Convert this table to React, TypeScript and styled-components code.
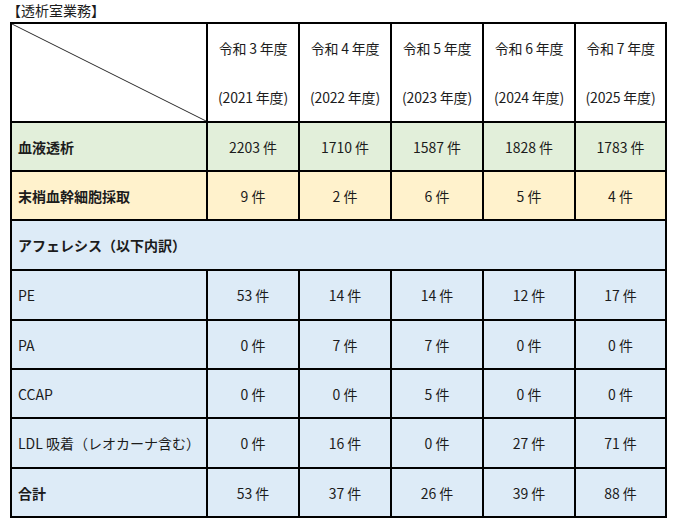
import React from "react";
import styled, { createGlobalStyle } from "styled-components";

const Global = createGlobalStyle`
  html, body { margin: 0; padding: 0; background: #ffffff; }
  body {
    font-family: "Noto Sans CJK JP", "Noto Sans", sans-serif;
    color: #1c1c1c;
  }
`;

const Page = styled.div`
  padding: 0 0 0 10px;
  width: 679px;
  box-sizing: border-box;
`;

const Title = styled.div`
  height: 22px;
  line-height: 20px;
  font-size: 14px;
  margin-left: -3px;
`;

const Grid = styled.div`
  display: grid;
  width: 657px;
  box-sizing: border-box;
  grid-template-columns: 194px 90px 90px 90px 90px 89px;
  grid-template-rows: 97px 47px 47px 48px 48px 47px 47px 48px 47px;
  gap: 2px;
  padding: 2px;
  background: #000;
`;

type Tone = "white" | "green" | "yellow" | "blue";
const toneColor: Record<Tone, string> = {
  white: "#ffffff",
  green: "#e2efda",
  yellow: "#fff2cc",
  blue: "#ddebf7",
};

const Cell = styled.div<{ $tone: Tone; $bold?: boolean; $label?: boolean; $span?: boolean }>`
  background: ${(p) => toneColor[p.$tone]};
  display: flex;
  align-items: center;
  justify-content: ${(p) => (p.$label ? "flex-start" : "center")};
  padding-left: ${(p) => (p.$label ? "6px" : "0")};
  font-size: 14px;
  font-weight: ${(p) => (p.$bold ? 700 : 400)};
  white-space: nowrap;
  grid-column: ${(p) => (p.$span ? "1 / -1" : "auto")};
`;

const DiagCell = styled.div`
  background: #ffffff;
`;

const Diag = styled.svg`
  display: block;
  width: 100%;
  height: 100%;
`;

const HeadCell = styled.div`
  background: #ffffff;
  display: flex;
  flex-direction: column;
  justify-content: space-around;
  align-items: center;
  font-size: 14px;
  white-space: nowrap;
  letter-spacing: -0.2px;
`;

const years = [
  ["令和 3 年度", "(2021 年度)"],
  ["令和 4 年度", "(2022 年度)"],
  ["令和 5 年度", "(2023 年度)"],
  ["令和 6 年度", "(2024 年度)"],
  ["令和 7 年度", "(2025 年度)"],
];

type Row = { label: string; tone: Tone; bold?: boolean; values?: number[] };

const rows: Row[] = [
  { label: "血液透析", tone: "green", bold: true, values: [2203, 1710, 1587, 1828, 1783] },
  { label: "末梢血幹細胞採取", tone: "yellow", bold: true, values: [9, 2, 6, 5, 4] },
  { label: "アフェレシス（以下内訳）", tone: "blue", bold: true },
  { label: "PE", tone: "blue", values: [53, 14, 14, 12, 17] },
  { label: "PA", tone: "blue", values: [0, 7, 7, 0, 0] },
  { label: "CCAP", tone: "blue", values: [0, 0, 5, 0, 0] },
  { label: "LDL 吸着（レオカーナ含む）", tone: "blue", values: [0, 16, 0, 27, 71] },
  { label: "合計", tone: "blue", bold: true, values: [53, 37, 26, 39, 88] },
];

export default function App() {
  return (
    <>
      <Global />
      <Page>
        <Title>【透析室業務】</Title>
        <Grid>
          <DiagCell>
            <Diag viewBox="0 0 194 97" preserveAspectRatio="none">
              <line x1="0" y1="0" x2="194" y2="97" stroke="#2a2a2a" strokeWidth="1" />
            </Diag>
          </DiagCell>
          {years.map(([a, b]) => (
            <HeadCell key={a}>
              <span>{a}</span>
              <span>{b}</span>
            </HeadCell>
          ))}
          {rows.map((r) => (
            <React.Fragment key={r.label}>
              <Cell $tone={r.tone} $bold={r.bold} $label $span={!r.values}>
                {r.label}
              </Cell>
              {r.values?.map((v, i) => (
                <Cell key={i} $tone={r.tone}>
                  {v} 件
                </Cell>
              ))}
            </React.Fragment>
          ))}
        </Grid>
      </Page>
    </>
  );
}
